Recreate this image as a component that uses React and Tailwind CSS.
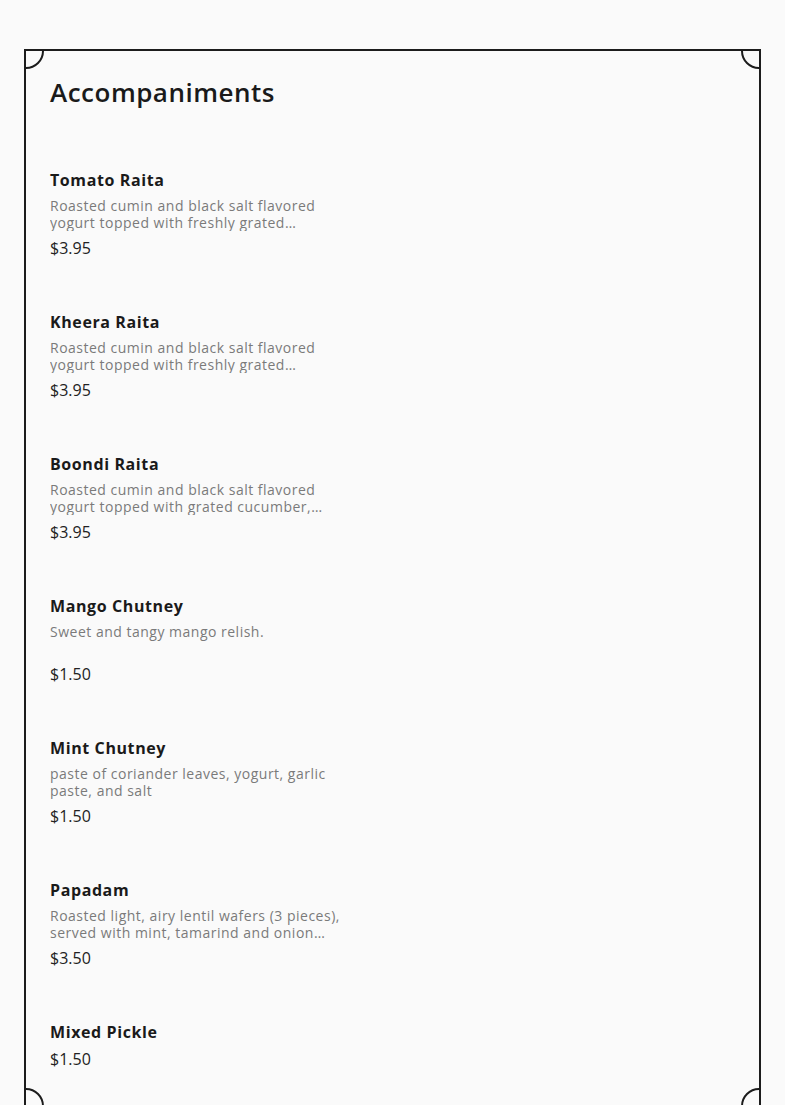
const items = [
  { name: 'Tomato Raita', desc: 'Roasted cumin and black salt flavored yogurt topped with freshly grated tomatoes, cucumber and carrots', price: '$3.95' },
  { name: 'Kheera Raita', desc: 'Roasted cumin and black salt flavored yogurt topped with freshly grated cucumber and mint', price: '$3.95' },
  { name: 'Boondi Raita', desc: 'Roasted cumin and black salt flavored yogurt topped with grated cucumber, boondi and fresh coriander', price: '$3.95' },
  { name: 'Mango Chutney', desc: 'Sweet and tangy mango relish.', price: '$1.50' },
  { name: 'Mint Chutney', desc: 'paste of coriander leaves, yogurt, garlic paste, and salt', price: '$1.50' },
  { name: 'Papadam', desc: 'Roasted light, airy lentil wafers (3 pieces), served with mint, tamarind and onion chutneys', price: '$3.50' },
  { name: 'Mixed Pickle', price: '$1.50' },
]

function Corner({ pos }) {
  return <div className={`absolute h-[36px] w-[36px] rounded-full border-2 border-[#1c1c1c] bg-[#fafafa] ${pos}`} />
}

export default function App() {
  return (
    <div className="min-h-screen bg-[#fafafa] px-6 pt-[49px] font-['Open_Sans',sans-serif]">
      <div className="relative overflow-hidden border-2 border-[#1c1c1c] bg-[#fafafa] px-6 pt-[24px] pb-[37px]">
        <Corner pos="-left-[18px] -top-[18px]" />
        <Corner pos="-right-[18px] -top-[18px]" />
        <Corner pos="-left-[18px] -bottom-[18px]" />
        <Corner pos="-right-[18px] -bottom-[18px]" />
        <h1 className="text-[26px] font-semibold leading-[34px] tracking-[0.5px] text-[#1a1a1a]">Accompaniments</h1>
        <div className="mt-[61px] flex flex-col gap-[54px]">
          {items.map(it => (
            <div key={it.name} className="flex w-[300px] flex-col gap-[7px]">
              <div className="text-[16px] font-bold leading-5 tracking-[0.6px] text-[#1a1a1a]">{it.name}</div>
              {it.desc && <p className="line-clamp-2 h-[34px] text-[14px] leading-[17px] tracking-[0.5px] text-[#7a7a7a]">{it.desc}</p>}
              <div className="text-[16px] font-medium leading-5 text-[#222]">{it.price}</div>
            </div>
          ))}
        </div>
      </div>
    </div>
  )
}
